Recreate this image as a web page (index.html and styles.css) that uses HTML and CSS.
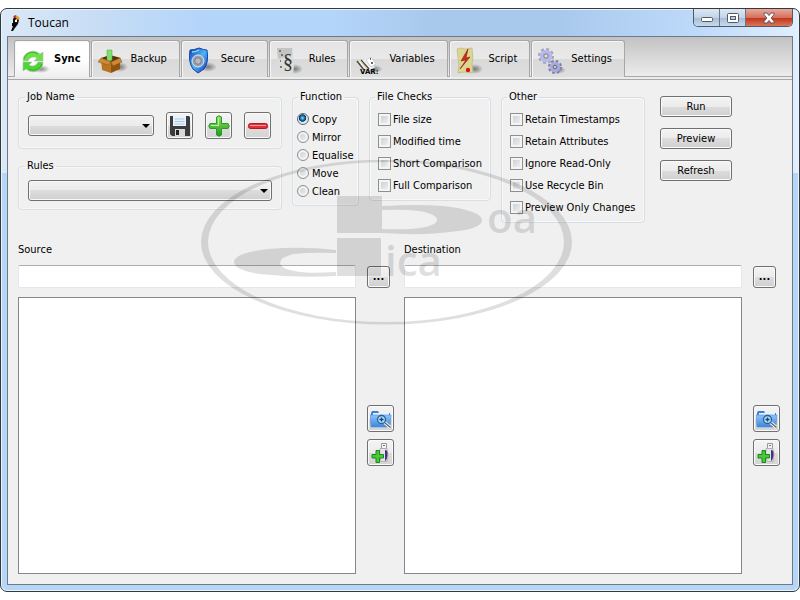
FILE: index.html
```html
<!DOCTYPE html>
<html lang="en">
<head>
<meta charset="UTF-8">
<title>Toucan</title>
<link rel="stylesheet" href="styles.css">
</head>
<body>

<!-- shared shapes -->
<svg class="defs" width="0" height="0" aria-hidden="true">
<defs>
<linearGradient id="g_green" x1="0" y1="0" x2="0" y2="1"><stop offset="0" stop-color="#8be05f"/><stop offset="1" stop-color="#1f9a1c"/></linearGradient>
<linearGradient id="g_blue" x1="0" y1="0" x2="1" y2="1"><stop offset="0" stop-color="#0f3fb8"/><stop offset=".5" stop-color="#4fb4f5"/><stop offset="1" stop-color="#0b2fc0"/></linearGradient>
<linearGradient id="g_folder" x1="0" y1="0" x2="0" y2="1"><stop offset="0" stop-color="#8fc3f5"/><stop offset="1" stop-color="#3f86dc"/></linearGradient>
<radialGradient id="g_shadow"><stop offset="0" stop-color="#000" stop-opacity=".45"/><stop offset="1" stop-color="#000" stop-opacity="0"/></radialGradient>
<symbol id="i_plus" viewBox="0 0 22 22">
<path d="M8.500 2q2.500-2.500 5 0v6.500H20q2.500 2.500 0 5h-6.500V20q-2.500 2.500-5 0v-6.500H2q-2.500-2.500 0-5h6.500z" fill="url(#g_green)" stroke="#2a9b28"/>
<path d="M10.500 2.500v8H3" fill="none" stroke="#b9f29d" stroke-width="1.200"/>
</symbol>
<symbol id="i_folder" viewBox="0 0 22 22">
<path d="M1 5l1-2h6l1 2h11v13H1z" fill="#3b7fd0"/>
<path d="M3 5h16v3H3z" fill="#e8f3ff"/>
<path d="M0 7h21l-1 12H1z" fill="url(#g_folder)" stroke="#4a8ddb" stroke-width=".6"/>
<path d="M14.500 14.500l6 5" stroke="#fff" stroke-width="3"/>
<path d="M14.500 14.500l6 5" stroke="#666" stroke-width="1.500"/>
<circle cx="11.500" cy="11.500" r="4" fill="#a8e0fa" stroke="#2c5c94" stroke-width="1.300"/>
<path d="M11.500 9.500v4M9.500 11.500h4" stroke="#173f86" stroke-width="1.300"/>
</symbol>
<symbol id="i_usb" viewBox="0 0 22 22">
<path d="M11.500 1.500h5v5h-5z" fill="#f4f4f4" stroke="#9a9a9a"/>
<path d="M13 3.500h2" stroke="#777"/>
<path d="M10 6.500h7q2 6 0 13h-6q-2-6-1-13z" fill="#e4e4e8" stroke="#aaa" stroke-width=".8"/>
<path d="M15 8q3 0 2.500 5t-2.500 6z" fill="#4a2e80"/>
<path d="M6 8.500h3.500v4h4V16h-4v4.500H6V16H2v-3.500h4z" fill="#4cc63a" stroke="#168a17"/>
</symbol>
</defs>
</svg>

<div class="window">

<header class="titlebar">
<svg class="app_icon" viewBox="0 0 12 16" width="12" height="16">
<path d="M3 4q2-4 5-1l1 2-1 4-3 4-2 3H1l2-5z" fill="#111"/>
<path d="M3 2l2-2 2 1-2 2z" fill="#c02a10"/>
<path d="M5 2l3-1 2 3-2 1z" fill="#f49a1e"/>
<path d="M5 5l2-1v3H5z" fill="#fff"/>
<path d="M2 8l5 1-2 3-3-1z" fill="#000"/>
</svg>
<h1>Toucan</h1>
<div class="win_buttons">
<button class="win_btn" type="button" aria-label="Minimize"><svg viewBox="0 0 14 12" width="14" height="12"><rect x="1.500" y="5.500" width="11" height="4" rx="1" fill="#fff" stroke="#535a66"/></svg></button>
<button class="win_btn" type="button" aria-label="Maximize"><svg viewBox="0 0 14 12" width="14" height="12"><rect x="1.500" y="1.500" width="11" height="9" rx="1" fill="#fff" stroke="#535a66"/><rect x="4.500" y="4.500" width="5" height="3" fill="#b9cfe6" stroke="#535a66"/></svg></button>
<button class="win_btn win_close" type="button" aria-label="Close"><svg viewBox="0 0 14 12" width="14" height="12"><path d="M2 1h3l2 2.500L9 1h3v1.500L9.200 6l2.800 3.500V11H9L7 8.500 5 11H2V9.500L4.800 6 2 2.500z" fill="#fff" stroke="#5b4a55" stroke-width=".9"/></svg></button>
</div>
</header>

<main class="client">

<nav class="tabs">
<button class="tab active" type="button">
<svg class="tab_icon" viewBox="0 0 30 28">
<ellipse cx="20" cy="22" rx="9" ry="4" fill="url(#g_shadow)"/>
<path d="M2 14a10 9.500 0 0 1 17-7l3-2v9h-9l3-3a6 6 0 0 0-9 3z" fill="#6be048" stroke="#b9b9b9" stroke-width=".6"/>
<path d="M22 15a10 9.500 0 0 1-17 7l-3 2v-9h9l-3 3a6 6 0 0 0 9-3z" fill="#4fd435" stroke="#b9b9b9" stroke-width=".6"/>
<path d="M3 12a9 9 0 0 1 14-5M21 17a9 9 0 0 1-13 5" fill="none" stroke="#35b525"/>
</svg>Sync</button>
<button class="tab" type="button">
<svg class="tab_icon" viewBox="0 0 30 28">
<ellipse cx="22" cy="20" rx="8" ry="5" fill="url(#g_shadow)"/>
<path d="M3 11l9-3 11 3-10 4z" fill="#5a3208"/>
<path d="M9 3h5v10l-3 1-2-1z" fill="#84dc70" stroke="#55b64a" stroke-width=".6"/>
<path d="M3 12l10 3v11L4 23z" fill="#b87420"/>
<path d="M13 15l9-4v11l-9 4z" fill="#8f5410"/>
<path d="M3 11l-3 4 10 3 3-3zM22 11l2 4-9 4-2-4z" fill="#ca8a38" stroke="#8a500e" stroke-width=".5"/>
</svg>Backup</button>
<button class="tab" type="button">
<svg class="tab_icon" viewBox="0 0 30 28">
<ellipse cx="20" cy="20" rx="9" ry="5" fill="url(#g_shadow)"/>
<path d="M2 3q4 0 9-2 5 2 8 2 2 13-3 19l-6 4-5-4Q0 15 2 3z" fill="url(#g_blue)" stroke="#1544a8"/>
<path d="M4 5q4 0 7-2" fill="none" stroke="#8fe0ff" stroke-width="1.500"/>
<circle cx="10" cy="14" r="6" fill="#9aa4b0" stroke="#dfe5ec"/>
<circle cx="10" cy="14" r="3.300" fill="#b6bbc3" stroke="#737d8a"/>
</svg>Secure</button>
<button class="tab" type="button">
<svg class="tab_icon" viewBox="0 0 30 28">
<ellipse cx="19" cy="22" rx="8" ry="5" fill="url(#g_shadow)"/>
<path d="M1 1h16v9l1 9-1 8-8-1-6 1-1-9z" fill="#dcdcdc"/>
<path d="M1 1h15v7L2 12z" fill="#c4c4c4"/>
<path d="M3 4h2M5 8h2M4 14h1M4 20h2" stroke="#777" stroke-width="2"/>
<text x="7" y="21" class="glyph_section">§</text>
</svg>Rules</button>
<button class="tab" type="button">
<svg class="tab_icon" viewBox="0 0 30 28">
<ellipse cx="18" cy="22" rx="9" ry="4" fill="url(#g_shadow)"/>
<path d="M2 15l10-4 7 9-8 5z" fill="#eee"/>
<path d="M1 14l7 9M5 13l8 9" stroke="#444" stroke-width="1.300"/>
<path d="M4 13l8 10" stroke="#d8c060"/>
<path d="M10 13l5-3 5 7-5 3z" fill="#fff" stroke="#aaa" stroke-width=".5"/>
<path d="M14 12h1M15 16h2" stroke="#333" stroke-width="1.500"/>
<text x="4" y="27" class="glyph_var">VAR:</text>
</svg>Variables</button>
<button class="tab" type="button">
<svg class="tab_icon" viewBox="0 0 30 28">
<ellipse cx="19" cy="22" rx="8" ry="5" fill="url(#g_shadow)"/>
<path d="M1 2l4-1 4 1 7-1 1 9-1 7 1 8-2 1-6-1-7 1 1-8-1-7z" fill="#dcd691" stroke="#b8b070" stroke-width=".6"/>
<path d="M12 2L5 14l5-1-6 9 10-12-4 1z" fill="#c8301c" stroke="#8c1c10" stroke-width=".6"/>
<circle cx="12" cy="23" r="2.200" fill="#d01818"/>
</svg>Script</button>
<button class="tab" type="button">
<svg class="tab_icon" viewBox="0 0 30 28">
<ellipse cx="20" cy="23" rx="8" ry="4" fill="url(#g_shadow)"/>
<circle cx="8" cy="9" r="6.800" fill="none" stroke="#a4a4c0" stroke-width="2.500" stroke-dasharray="3 2.340"/>
<circle cx="8" cy="9" r="4.200" fill="#eee" stroke="#b7b9e8" stroke-width="4"/>
<circle cx="8" cy="9" r="2.200" fill="#ddd" stroke="#777"/>
<circle cx="17" cy="20" r="5.800" fill="none" stroke="#7f7fa8" stroke-width="2.500" stroke-dasharray="2.600 1.950"/>
<circle cx="17" cy="20" r="3.500" fill="#eee" stroke="#a8aae2" stroke-width="3.500"/>
<circle cx="17" cy="20" r="1.800" fill="#ccc" stroke="#666"/>
</svg>Settings</button>
</nav>

<section class="options">

<div class="job_column">
<fieldset class="group">
<legend>Job Name</legend>
<div class="job_row">
<div class="combo"><select aria-label="Job Name"><option></option></select></div>
<button class="icon_btn" type="button" aria-label="Save">
<svg viewBox="0 0 22 22" width="22" height="22">
<path d="M1 1h19l1 1v19H3l-2-2z" fill="#3c3c40"/>
<path d="M4 1h13v10H4z" fill="#eaf3fb"/>
<path d="M5.500 4h10M5.500 6.500h10M5.500 9h10" stroke="#a9c6e0"/>
<path d="M6 14h10v7H6z" fill="#d8d8d8"/>
<path d="M7 15h3v5H7z" fill="#222"/>
</svg></button>
<button class="icon_btn" type="button" aria-label="Add"><svg width="22" height="22"><use href="#i_plus"/></svg></button>
<button class="icon_btn" type="button" aria-label="Remove">
<svg viewBox="0 0 22 22" width="22" height="22"><rect x="1.500" y="8.500" width="19" height="5" rx="2" fill="#e03038" stroke="#b81820"/><path d="M3 10.500h16" stroke="#f49a9a"/></svg></button>
</div>
</fieldset>

<fieldset class="group">
<legend>Rules</legend>
<div class="rules_row">
<div class="combo"><select aria-label="Rules"><option></option></select></div>
</div>
</fieldset>
</div>

<fieldset class="group function_group">
<legend>Function</legend>
<label class="radio"><input type="radio" name="function" checked>Copy</label>
<label class="radio"><input type="radio" name="function">Mirror</label>
<label class="radio"><input type="radio" name="function">Equalise</label>
<label class="radio"><input type="radio" name="function">Move</label>
<label class="radio"><input type="radio" name="function">Clean</label>
</fieldset>

<fieldset class="group checks_group">
<legend>File Checks</legend>
<label class="check"><input type="checkbox">File size</label>
<label class="check"><input type="checkbox">Modified time</label>
<label class="check"><input type="checkbox">Short Comparison</label>
<label class="check"><input type="checkbox">Full Comparison</label>
</fieldset>

<fieldset class="group other_group">
<legend>Other</legend>
<label class="check"><input type="checkbox">Retain Timestamps</label>
<label class="check"><input type="checkbox">Retain Attributes</label>
<label class="check"><input type="checkbox">Ignore Read-Only</label>
<label class="check"><input type="checkbox">Use Recycle Bin</label>
<label class="check"><input type="checkbox">Preview Only Changes</label>
</fieldset>

<div class="actions">
<button class="btn" type="button">Run</button>
<button class="btn" type="button">Preview</button>
<button class="btn" type="button">Refresh</button>
</div>

</section>

<section class="panes">

<div class="pane">
<label class="pane_label" for="source">Source</label>
<input class="path" type="text" id="source">
<button class="btn browse" type="button" aria-label="Browse source">...</button>
<div class="tree"></div>
<div class="side">
<button class="icon_btn" type="button" aria-label="Expand source"><svg width="22" height="22"><use href="#i_folder"/></svg></button>
<button class="icon_btn" type="button" aria-label="Add source variable"><svg width="22" height="22"><use href="#i_usb"/></svg></button>
</div>
</div>

<div class="pane">
<label class="pane_label" for="destination">Destination</label>
<input class="path" type="text" id="destination">
<button class="btn browse" type="button" aria-label="Browse destination">...</button>
<div class="tree"></div>
<div class="side">
<button class="icon_btn" type="button" aria-label="Expand destination"><svg width="22" height="22"><use href="#i_folder"/></svg></button>
<button class="icon_btn" type="button" aria-label="Add destination variable"><svg width="22" height="22"><use href="#i_usb"/></svg></button>
</div>
</div>

</section>

</main>
</div>

<!-- logo laid over the window -->
<svg class="watermark" viewBox="0 0 372 166" width="372" height="166">
<path fill-rule="evenodd" d="M0 82A185.500 82.500 0 0 1 371 82A185.500 82.500 0 0 1 0 82ZM7 82A178 80 0 0 0 363 82A178 80 0 0 0 7 82Z"/>
<path d="M136 36h45v37h-45z"/>
<path d="M136 78h44v38h-44z"/>
<path d="M181 46q50-3 76 2 24 5 24 12 0 8-24 11-32 5-76 2v-4q25 1 38-1 17-3 17-8 0-6-18-9-16-2-37-1z"/>
<path d="M135 90q-34-4-68-1-34 4-34 13 0 8 26 12 36 4 76 2v-4q-28 2-42-1-14-3-14-8 0-6 14-9 16-2 42-1z"/>
<text x="286" y="73">oa</text>
<text x="184" y="116">ica</text>
</svg>

</body>
</html>
```
FILE: styles.css
```css
  *{
	box-sizing: border-box;
  }

  body{
	margin: 0;
	padding: 8px 0;
	background-color: #fff;
	color: #000;
	font-family: "DejaVu Sans Condensed", "Open Sans", sans-serif;
	font-size: 11px;
	line-height: 14px;
	min-height: 100vh;
	display: flex;
	position: relative;
  }

  button, input, select{
	font: inherit;
	color: inherit;
	margin: 0;
  }

  svg{
	display: block;
  }

  .defs{
	position: absolute;
  }

  /* window frame */
  .window{
	flex: 1;
	display: flex;
	flex-direction: column;
	border: 1px solid #33393f;
	border-radius: 7px;
	box-shadow: inset 0 0 0 1px #e9f4ff;
	background: linear-gradient(to bottom, transparent 164px, #b6d6f7 164px),
		linear-gradient(to right, #dbe8f6, #c6ddf5 100px, #b4d5fa 200px, #b4d5fa 330px, #a9c9ec 430px, #a9c9ec 560px, #bedafb 700px, #e2effc 100%);
	padding: 0 6px 6px;
  }

  .titlebar{
	height: 27px;
	display: flex;
	align-items: center;
	padding-left: 3px;
  }

  .titlebar h1{
	flex: 1;
	margin: 0 0 0 6px;
	font: 12px "Open Sans", sans-serif;
  }

  .win_buttons{
	align-self: flex-start;
	display: flex;
	border: 1px solid #4e5a68;
	border-top: 0;
	border-radius: 0 0 5px 5px;
	overflow: hidden;
  }

  .win_btn{
	width: 26px;
	height: 17px;
	padding: 0;
	border: 0;
	border-right: 1px solid #6b7683;
	background: linear-gradient(#dde8f4, #c4d4e6 50%, #a5bad2 50%, #c6daee);
	display: flex;
	align-items: center;
	justify-content: center;
  }

  .win_close{
	width: 46px;
	border-right: 0;
	background: linear-gradient(#e8aa9e, #d5705c 50%, #bd3018 50%, #d9765c);
  }

  .client{
	flex: 1;
	display: flex;
	flex-direction: column;
	border: 1px solid #6c7a8a;
	background-color: #f0f0f0;
  }

  /* tabs */
  .tabs{
	display: flex;
	gap: 1px;
	height: 43px;
	padding: 3px 6px 0;
	border-bottom: 1px solid #a8a8a8;
	box-shadow: inset 0 -2px 0 #ececec, inset 0 -3px 0 #a8a8a8;
	background: linear-gradient(#c2c2c2, #efefef);
  }

  .tab{
	display: flex;
	align-items: center;
	gap: 3px;
	height: 37px;
	padding: 0 12px 0 6px;
	border: 1px solid #a6a6a6;
	border-bottom: 0;
	border-radius: 3px 3px 0 0;
	background: linear-gradient(#e4e4e4, #e9e9e9 50%, #d9d9d9 50%, #dfdfdf);
	box-shadow: inset 1px 1px 0 #f6f6f6;
  }

  .tab.active{
	padding-right: 8px;
	background: linear-gradient(#fff 50%, #efefef);
	font-weight: bold;
  }

  .tab_icon{
	width: 30px;
	height: 28px;
	margin-top: 4px;
  }

  .glyph_section{
	font: 20px "Liberation Serif", serif;
	fill: #333;
  }

  .glyph_var{
	font: bold 7px "DejaVu Sans", sans-serif;
  }

  /* options */
  .options{
	display: flex;
	align-items: flex-start;
	gap: 10px;
	padding: 10px 10px 0;
  }

  .job_column{
	width: 264px;
	display: flex;
	flex-direction: column;
	gap: 10px;
  }

  .group{
	min-width: 0;
	margin: 0;
	padding: 7px 8px 6px 9px;
	border: 1px solid #d5dfe5;
	border-radius: 4px;
	box-shadow: inset 0 0 0 1px #f8f8f8;
  }

  .group legend{
	margin-left: -3px;
	padding: 0 2px;
  }

  .job_row{
	display: flex;
	align-items: center;
	gap: 12px;
	padding: 1px 2px 3px 0;
  }

  .rules_row{
	padding: 0 1px 2px 0;
  }

  .combo{
	flex: 1;
	display: grid;
	align-items: center;
  }

  .combo select{
	grid-area: 1 / 1;
	width: 100%;
	height: 21px;
	appearance: none;
	border: 1px solid #707070;
	border-radius: 3px;
	background: linear-gradient(#f2f2f2, #ebebeb 50%, #dddddd 50%, #cfcfcf);
	box-shadow: inset 0 0 0 1px #f8f8f8;
  }

  .combo::after{
	content: "";
	grid-area: 1 / 1;
	justify-self: end;
	margin-right: 4px;
	border: 4px solid transparent;
	border-top-color: #000;
	border-bottom: 0;
	pointer-events: none;
  }

  .icon_btn{
	width: 27px;
	height: 27px;
	padding: 0;
	border: 1px solid #707070;
	border-radius: 3px;
	background: linear-gradient(#f4f4f4, #ebebeb 50%, #dddddd 50%, #d4d4d4);
	box-shadow: inset 0 0 0 1px #fafafa;
	display: flex;
	align-items: center;
	justify-content: center;
  }

  .function_group{
	width: 67px;
	padding: 7px 0 4px 4px;
  }

  .function_group legend{
	margin-left: 1px;
  }

  .checks_group{
	width: 122px;
	padding: 5px 0 3px 8px;
  }

  .other_group{
	width: 144px;
	padding: 5px 0 3px 8px;
  }

  .radio, .check{
	display: flex;
	align-items: center;
	white-space: nowrap;
  }

  .radio{
	height: 18px;
	gap: 3px;
  }

  .check{
	height: 22px;
	gap: 2px;
  }

  .radio input, .check input{
	appearance: none;
	flex: none;
	width: 13px;
	height: 13px;
	margin-bottom: 2px;
	border: 1px solid #8e8f8f;
	background: linear-gradient(135deg, #c5c9cf, #f6f6f6);
	box-shadow: inset 0 0 0 2px #f4f4f4;
  }

  .radio input{
	width: 12px;
	height: 12px;
	border-radius: 50%;
  }

  .radio input:checked{
	border-color: #5a6a7a;
	background: radial-gradient(circle at 45% 40%, #8fe0fa, #1b78b4 25%, #0b3558 42%, #dfe8ee 50%);
	box-shadow: none;
  }

  .btn{
	height: 21px;
	padding: 0;
	border: 1px solid #707070;
	border-radius: 3px;
	background: linear-gradient(#f3f3f3, #ebebeb 50%, #dddddd 50%, #cfcfcf);
	box-shadow: inset 0 0 0 1px #fafafa;
  }

  .actions{
	display: flex;
	flex-direction: column;
	gap: 11px;
	padding: 6px 0 0 5px;
  }

  .actions .btn{
	width: 72px;
  }

  /* source and destination */
  .panes{
	flex: 1;
	display: flex;
	gap: 10px;
	padding: 20px 12px 10px 10px;
  }

  .pane{
	flex: 1;
	display: grid;
	grid-template-columns: 1fr 27px;
	grid-template-rows: auto auto 1fr;
	column-gap: 11px;
  }

  .pane_label{
	grid-column: 1 / 3;
	margin-bottom: 8px;
  }

  .path{
	width: 100%;
	height: 23px;
	border: 1px solid #e2e8ee;
	border-top-color: #abadb3;
	border-radius: 2px;
	background-color: #fff;
  }

  .browse{
	width: 23px;
	height: 22px;
	align-self: end;
	font-weight: bold;
  }

  .tree{
	margin-top: 9px;
	border: 1px solid #828790;
	background-color: #fff;
  }

  .side{
	margin-top: 9px;
	display: flex;
	flex-direction: column;
	justify-content: center;
	gap: 7px;
  }

  .watermark{
	position: absolute;
	left: 201px;
	top: 160px;
	opacity: .12;
	pointer-events: none;
  }

  .watermark text{
	font: 600 42px "Open Sans", sans-serif;
  }
```
